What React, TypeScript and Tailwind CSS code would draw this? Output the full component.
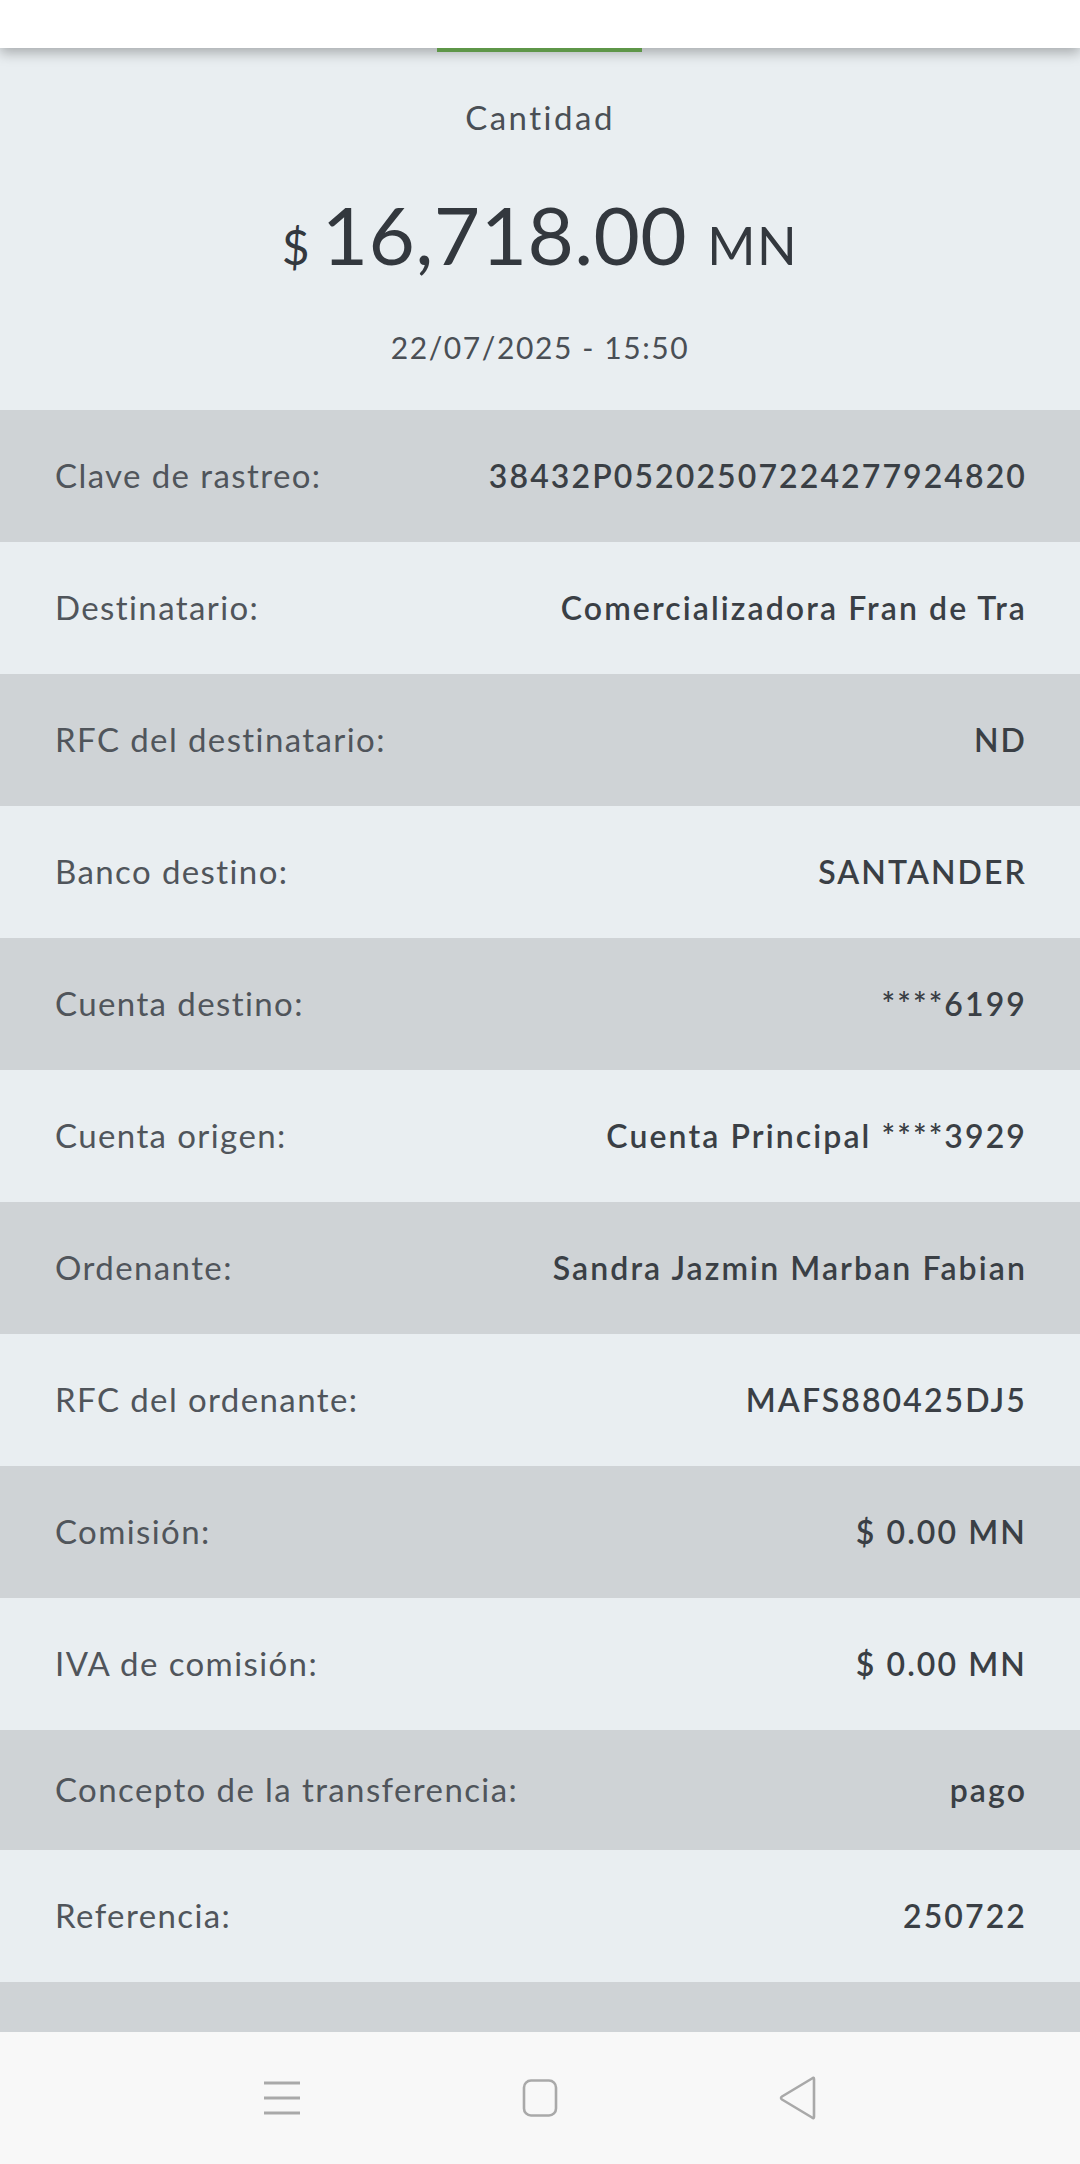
import React from "react";

const rows: { label: string; value: string; h: string; gray: boolean }[] = [
  { label: "Clave de rastreo:", value: "38432P05202507224277924820", h: "h-[132px]", gray: true },
  { label: "Destinatario:", value: "Comercializadora Fran de Tra", h: "h-[132px]", gray: false },
  { label: "RFC del destinatario:", value: "ND", h: "h-[132px]", gray: true },
  { label: "Banco destino:", value: "SANTANDER", h: "h-[132px]", gray: false },
  { label: "Cuenta destino:", value: "****6199", h: "h-[132px]", gray: true },
  { label: "Cuenta origen:", value: "Cuenta Principal ****3929", h: "h-[132px]", gray: false },
  { label: "Ordenante:", value: "Sandra Jazmin Marban Fabian", h: "h-[132px]", gray: true },
  { label: "RFC del ordenante:", value: "MAFS880425DJ5", h: "h-[132px]", gray: false },
  { label: "Comisión:", value: "$ 0.00 MN", h: "h-[132px]", gray: true },
  { label: "IVA de comisión:", value: "$ 0.00 MN", h: "h-[132px]", gray: false },
  { label: "Concepto de la transferencia:", value: "pago", h: "h-[120px]", gray: true },
  { label: "Referencia:", value: "250722", h: "h-[132px]", gray: false },
];

export default function App() {
  return (
    <div
      className="w-[1080px] h-[2164px] flex flex-col bg-[#e9eef1] overflow-hidden"
      style={{ fontFamily: "Lato, 'Noto Sans', sans-serif" }}
    >
      <div className="relative z-10 h-[48px] shrink-0 bg-white shadow-[0_5px_12px_rgba(0,0,0,0.28)]">
        <div className="absolute left-[437px] top-[48px] w-[205px] h-[4px] bg-[#5e9648]" />
      </div>

      <div className="h-[362px] shrink-0 flex flex-col items-center pt-[49px]">
        <div className="h-[40px] leading-[40px] text-[33px] text-[#4a4f55] tracking-[2.5px]">Cantidad</div>
        <div className="mt-[52px] h-[90px] flex items-baseline text-[#33383e]">
          <span className="text-[48px] mr-[12px]">$</span>
          <span className="text-[80px] leading-[90px] tracking-[0.4px]">16,718.00</span>
          <span className="text-[52px] ml-[20px] tracking-[1.5px]">MN</span>
        </div>
        <div className="mt-[48px] h-[40px] leading-[40px] text-[30px] text-[#4a4f55] tracking-[1.6px]">
          22/07/2025 - 15:50
        </div>
      </div>

      {rows.map((r) => (
        <div
          key={r.label}
          className={`${r.h} shrink-0 flex items-center justify-between px-[55px] ${
            r.gray ? "bg-[#cfd3d6]" : "bg-[#e9eef1]"
          }`}
        >
          <span className="text-[33px] text-[#50555b] tracking-[1.4px]">{r.label}</span>
          <span className="text-[32px] font-semibold text-[#3a3f45] tracking-[2.1px] -mr-[2px]">{r.value}</span>
        </div>
      ))}

      <div className="h-[50px] shrink-0 bg-[#cfd3d6]" />

      <div className="h-[132px] shrink-0 bg-[#f8f8f8] flex items-center justify-center gap-[198px]">
        <div className="w-[60px] h-[60px] flex items-center justify-center">
          <svg width="40" height="40" viewBox="0 0 40 40">
            <g stroke="#a9a9a9" strokeWidth="3">
              <line x1="2" y1="5" x2="38" y2="5" />
              <line x1="2" y1="20" x2="38" y2="20" />
              <line x1="2" y1="35" x2="38" y2="35" />
            </g>
          </svg>
        </div>
        <div className="w-[60px] h-[60px] flex items-center justify-center">
          <svg width="40" height="40" viewBox="0 0 40 40">
            <rect x="4" y="2.5" width="32" height="35" rx="7" fill="none" stroke="#a9a9a9" strokeWidth="2.6" />
          </svg>
        </div>
        <div className="w-[60px] h-[60px] flex items-center justify-center">
          <svg width="40" height="44" viewBox="0 0 40 44">
            <path
              d="M36 3 L36 41 Q36 43 34 41.5 L4 23.5 Q2 22 4 20.5 L34 2.5 Q36 1 36 3 Z"
              fill="none"
              stroke="#a9a9a9"
              strokeWidth="2.6"
              strokeLinejoin="round"
            />
          </svg>
        </div>
      </div>
    </div>
  );
}
